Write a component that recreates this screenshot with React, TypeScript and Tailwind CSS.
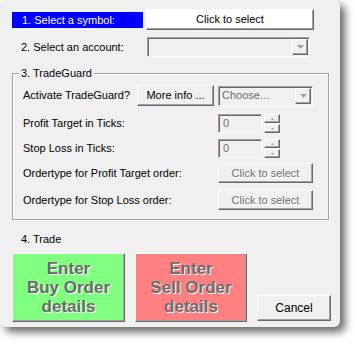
import React from 'react';

const font = { fontFamily: '"Liberation Sans", Arial, sans-serif' };

// classic raised button edge
const raised = 'border border-t-white border-l-white border-r-[#696969] border-b-[#696969] shadow-[inset_-1px_-1px_0_#a0a0a0]';
// sunken field edge
const sunken = 'border border-t-[#a0a0a0] border-l-[#a0a0a0] border-r-white border-b-white shadow-[inset_1px_1px_0_#696969]';

const DropArrow: React.FC = () => (
    <div className={`w-[16px] h-[16px] bg-[#f0f0f0] ${raised} flex items-center justify-center`}>
        <svg width="7" height="4" viewBox="0 0 7 4"><path d="M0 0h7L3.5 4z" fill="#a0a0a0" /></svg>
    </div>
);

const Combo: React.FC<{ w: string; text?: string }> = ({ w, text }) => (
    <div className={`${w} h-[20px] ${sunken} bg-[#f0f0f0] flex items-center justify-between pl-[3px] pr-[1px]`}>
        <span className="text-[#6d6d6d] text-[11px]">{text}</span>
        <DropArrow />
    </div>
);

const Spin: React.FC = () => (
    <div className="flex items-center">
        <div className={`w-[44px] h-[19px] ${sunken} bg-[#f0f0f0] pl-[4px] text-[11px] text-[#6d6d6d] leading-[17px]`}>0</div>
        <div className="flex flex-col ml-[2px] gap-[1px]">
            <div className={`w-[16px] h-[9px] bg-[#f0f0f0] ${raised} flex items-center justify-center`}>
                <svg width="3" height="2" viewBox="0 0 3 2"><path d="M1.5 0L3 2H0z" fill="#a0a0a0" /></svg>
            </div>
            <div className={`w-[16px] h-[9px] bg-[#f0f0f0] ${raised} flex items-center justify-center`}>
                <svg width="3" height="2" viewBox="0 0 3 2"><path d="M0 0h3L1.5 2z" fill="#a0a0a0" /></svg>
            </div>
        </div>
    </div>
);

const DisabledBtn: React.FC<{ label: string }> = ({ label }) => (
    <div className={`w-[95px] h-[20px] bg-[#f0f0f0] ${raised} flex items-center justify-center text-[11px] text-[#6d6d6d] [text-shadow:1px_1px_0_#fff]`}>
        {label}
    </div>
);

const BigBtn: React.FC<{ bg: string; lines: string[]; w: string }> = ({ bg, lines, w }) => (
    <div className={`${w} h-[69px] ${bg} ${raised} flex flex-col items-center justify-center text-[17px] leading-[19px] font-bold text-[#6b6b6b] [text-shadow:1px_1px_0_#fff]`}>
        {lines.map(l => <span key={l}>{l}</span>)}
    </div>
);

export default function App() {
    return (
        <div className="w-[357px] h-[344px] bg-white" style={font}>
            <div className="w-[340px] h-[327px] bg-[#f0f0f0] rounded-[6px] shadow-[5px_5px_8px_rgba(0,0,0,0.6)] flex flex-col text-[11px] text-black">

                {/* 1. symbol */}
                <div className="flex items-center mt-[9px] pl-[12px]">
                    <div className="w-[131px] h-[16px] bg-[#0000ff] text-white pl-[10px] leading-[16px]">1. Select a symbol:</div>
                    <div className={`ml-[3px] w-[168px] h-[21px] bg-white ${raised} flex items-center justify-center`}>Click to select</div>
                </div>

                {/* 2. account */}
                <div className="flex items-center mt-[7px]">
                    <div className="w-[147px] pl-[21px]">2. Select an account:</div>
                    <Combo w="w-[163px]" />
                </div>

                {/* 3. TradeGuard */}
                <div className="relative mt-[16px] ml-[12px] w-[317px] h-[147px] border border-[#a0a0a0] shadow-[inset_1px_1px_0_#fff,1px_1px_0_#fff] flex flex-col pl-[10px]">
                    <span className="absolute -top-[8px] left-[6px] bg-[#f0f0f0] px-[2px] leading-[14px]">3. TradeGuard</span>

                    <div className="flex items-center mt-[11px]">
                        <div className="w-[114px]">Activate TradeGuard?</div>
                        <div className={`w-[77px] h-[21px] bg-[#f0f0f0] ${raised} flex items-center justify-center`}>More info ...</div>
                        <div className="ml-[4px]"><Combo w="w-[95px]" text="Choose..." /></div>
                    </div>

                    <div className="flex items-center mt-[8px]">
                        <div className="w-[195px]">Profit Target in Ticks:</div>
                        <Spin />
                    </div>

                    <div className="flex items-center mt-[6px]">
                        <div className="w-[195px]">Stop Loss in Ticks:</div>
                        <Spin />
                    </div>

                    <div className="flex items-center mt-[5px]">
                        <div className="w-[195px]">Ordertype for Profit Target order:</div>
                        <DisabledBtn label="Click to select" />
                    </div>

                    <div className="flex items-center mt-[7px]">
                        <div className="w-[195px]">Ordertype for Stop Loss order:</div>
                        <DisabledBtn label="Click to select" />
                    </div>
                </div>

                {/* 4. Trade */}
                <div className="mt-[12px] pl-[21px] leading-[14px]">4. Trade</div>

                <div className="flex items-end mt-[7px] pl-[12px]">
                    <BigBtn bg="bg-[#80ff80]" w="w-[113px]" lines={['Enter', 'Buy Order', 'details']} />
                    <div className="ml-[10px]">
                        <BigBtn bg="bg-[#ff8080]" w="w-[112px]" lines={['Enter', 'Sell Order', 'details']} />
                    </div>
                    <div className={`ml-[10px] mb-[1px] w-[74px] h-[26px] bg-[#f0f0f0] ${raised} flex items-center justify-center text-[12px]`}>Cancel</div>
                </div>
            </div>
        </div>
    );
}
